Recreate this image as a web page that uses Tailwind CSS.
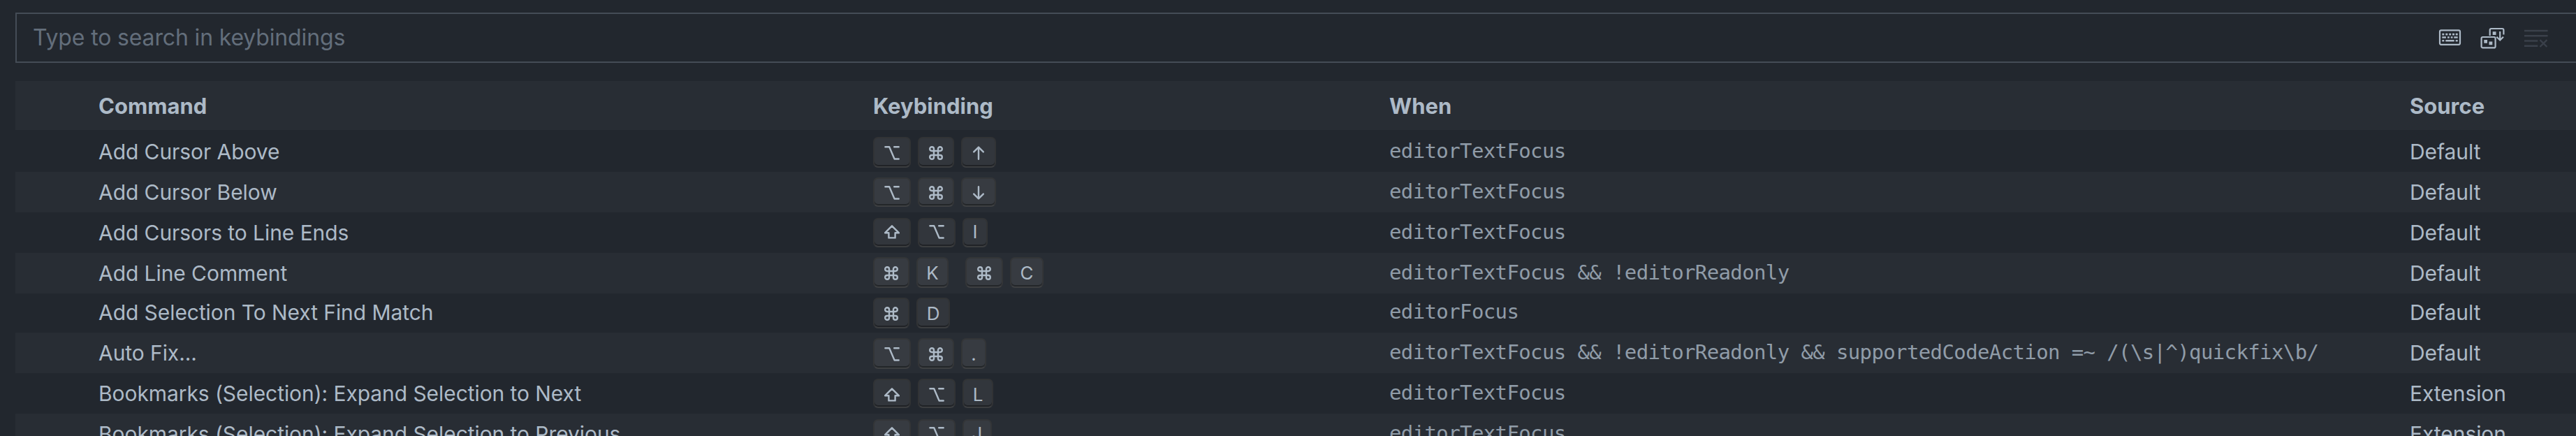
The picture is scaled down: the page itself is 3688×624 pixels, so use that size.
<!DOCTYPE html>
<html lang="en">
<head>
    <meta charset="UTF-8">
    <meta name="viewport" content="width=device-width, initial-scale=1.0">
    <title>Keyboard Shortcuts</title>
    <script src="https://cdn.jsdelivr.net/npm/@tailwindcss/browser@4"></script>
</head>
<body class="h-[624px] overflow-hidden bg-[#22272e] font-['Inter',sans-serif] text-[30px] tracking-[-0.07px] text-[#adbac7]">

    <div class="flex h-full flex-col pl-[22px] pt-[18px]">

        <!-- Search -->
        <div class="flex h-[72px] shrink-0 items-center justify-between border-y-2 border-l-2 border-[#444c56] pl-[23px] pr-[39px]">
            <span class="text-[32px] tracking-[-0.15px] text-[#636e7b]">Type to search in keybindings</span>
            <div class="flex gap-[25px]">
                <!-- Record keys -->
                <svg class="size-[36px]" viewBox="0 0 36 36" fill="currentColor">
                    <rect x="4" y="7.4" width="29" height="20.4" rx="2" fill="none" stroke="currentColor" stroke-width="2.2"/>
                    <path d="M7.3 11.8h3v2.6h-3zM12.3 11.8h3v2.6h-3zM17.2 11.8h3v2.6h-3zM22 11.8h3v2.6h-3zM26.7 11.8h3v2.6h-3z"/>
                    <path d="M7.3 16.2h5.6v2.6H7.3zM15 16.2h2.8v2.6H15zM19.7 16.2h2.8v2.6h-2.8zM24.3 16.2h5.4v2.6h-5.4z"/>
                    <path d="M7.3 21h3v2.6h-3zM12.3 21h12.4v2.6H12.3zM26.7 21h3v2.6h-3z"/>
                </svg>
                <!-- Sort by precedence -->
                <svg class="size-[36px]" viewBox="0 0 36 36" fill="none" stroke="currentColor" stroke-width="2.2">
                    <rect x="2.6" y="17" width="20" height="15.4" rx="2"/>
                    <path d="M14.7 15V7a2 2 0 0 1 2-2h15.7a2 2 0 0 1 2 2v6.5"/>
                    <path d="M29.2 9v12.4M24.4 16.7l4.8 4.8 4.8-4.8"/>
                    <path d="M6.3 21H11v4.8H6.3zM13.5 23.4h4.8v4.8h-4.8zM18.7 9.2h4.8V14h-4.8z" fill="currentColor" stroke="none"/>
                </svg>
                <!-- Clear input -->
                <svg class="ml-[2px] size-[36px] text-[#3a404a]" viewBox="0 0 36 36" fill="none" stroke="currentColor" stroke-width="2.4">
                    <path d="M1 8h33.6M1 15.3h33.6M1 22.5h19.3M1 29.7h19.3M23.4 21.2l10 9.8M33.4 21.2l-10 9.8"/>
                </svg>
            </div>
        </div>

        <!-- Table header -->
        <div class="mt-[26px] grid h-[70px] shrink-0 grid-cols-[1109px_739px_1461px_1fr] items-center bg-[#282d34] pl-[119px] pt-[3px] text-[31px] font-bold tracking-normal">
            <span>Command</span>
            <span>Keybinding</span>
            <span>When</span>
            <span>Source</span>
        </div>

        <div id="rows"></div>
    </div>

    <script>
        const ROW = 'grid grid-cols-[1109px_739px_1461px_1fr] items-center pl-[119px]';
        const KEY = 'flex items-start justify-center rounded-[7px] border-2 border-[#333333]/60 border-b-[#444444]/60 bg-[#808080]/17 shadow-[inset_0_-2px_0_rgba(0,0,0,0.36)]';

        const icon = (w, d) => `<svg class="${w} h-[20px]" viewBox="0 0 ${w === 'w-[20px]' ? 20 : w === 'w-[16px]' ? 16 : 22} 20" fill="none" stroke="currentColor" stroke-width="2.4" stroke-linecap="round" stroke-linejoin="round"><path d="${d}"/></svg>`;

        const glyphs = {
            option: icon('w-[22px]', 'M1.4 1.3H7.2L14.6 18.5H20.7M14.2 1.3H20.7'),
            cmd: icon('w-[20px]', 'M7 7V4.1A2.9 2.9 0 1 0 4.1 7H15.9A2.9 2.9 0 1 0 13 4.1V15.9A2.9 2.9 0 1 0 15.9 13H4.1A2.9 2.9 0 1 0 7 15.9Z'),
            shift: icon('w-[22px]', 'M11 1.3L21 11.3H15.6V18.4H6.4V11.3H1Z'),
            up: icon('w-[16px]', 'M8 1.8V18.8M1.2 8.4L8 1.6L14.8 8.4'),
            down: icon('w-[16px]', 'M8 1.2V18.2M1.2 11.6L8 18.4L14.8 11.6'),
        };

        // keys: [label, width class]; a null entry separates the two parts of a chord
        const rows = [
            { size: 'h-[60px] pt-[2px]', keysAt: 'mt-[8px]', keyBox: 'h-[44px] pt-[11px]', command: 'Add Cursor Above', keys: [['option', 'w-[54px]'], ['cmd', 'w-[52px]'], ['up', 'w-[50px]']], when: 'editorTextFocus', source: 'Default' },
            { size: 'h-[58px]', keysAt: 'mt-[8px]', keyBox: 'h-[42px] pt-[10px]', command: 'Add Cursor Below', keys: [['option', 'w-[54px]'], ['cmd', 'w-[52px]'], ['down', 'w-[50px]']], when: 'editorTextFocus', source: 'Default' },
            { size: 'h-[58px]', keysAt: 'mt-[8px]', keyBox: 'h-[42px] pt-[8px]', command: 'Add Cursors to Line Ends', keys: [['shift', 'w-[54px]'], ['option', 'w-[54px]'], ['I', 'w-[36px]']], when: 'editorTextFocus', source: 'Default' },
            { size: 'h-[58px]', keysAt: 'mt-[6px]', keyBox: 'h-[44px] pt-[11px]', command: 'Add Line Comment', keys: [['cmd', 'w-[52px]'], ['K', 'w-[46px]'], null, ['cmd', 'w-[54px]'], ['C', 'w-[48px]']], when: 'editorTextFocus && !editorReadonly', source: 'Default' },
            { size: 'h-[56px] pb-[2px]', keysAt: 'mt-[6px]', keyBox: 'h-[44px] pt-[11px]', command: 'Add Selection To Next Find Match', keys: [['cmd', 'w-[52px]'], ['D', 'w-[48px]']], when: 'editorFocus', source: 'Default' },
            { size: 'h-[58px]', keysAt: 'mt-[8px]', keyBox: 'h-[44px] pt-[11px]', command: 'Auto Fix...', keys: [['option', 'w-[54px]'], ['cmd', 'w-[52px]'], ['.', 'w-[36px]']], when: 'editorTextFocus && !editorReadonly && supportedCodeAction =~ /(\\s|^)quickfix\\b/', source: 'Default' },
            { size: 'h-[58px]', keysAt: 'mt-[8px]', keyBox: 'h-[42px] pt-[11px]', command: 'Bookmarks (Selection): Expand Selection to Next', keys: [['shift', 'w-[54px]'], ['option', 'w-[54px]'], ['L', 'w-[44px]']], when: 'editorTextFocus', source: 'Extension' },
            { size: 'h-[58px]', keysAt: 'mt-[8px]', keyBox: 'h-[42px] pt-[9px]', command: 'Bookmarks (Selection): Expand Selection to Previous', keys: [['shift', 'w-[54px]'], ['option', 'w-[54px]'], ['J', 'w-[42px]']], when: 'editorTextFocus', source: 'Extension' },
        ];

        function renderKey(key, keyBox) {
            if (!key) return '<span class="w-[4px]"></span>';
            const [label, width] = key;
            const face = glyphs[label] || `<span class="text-[26px] leading-[20px]">${label}</span>`;
            return `<span class="${KEY} ${keyBox} ${width}">${face}</span>`;
        }

        document.getElementById('rows').innerHTML = rows.map((row, i) => `
            <div class="${ROW} ${row.size} ${i % 2 ? 'bg-[#282d34]' : ''}">
                <span class="whitespace-nowrap">${row.command}</span>
                <div class="flex gap-[10px] self-start ${row.keysAt}">${row.keys.map(k => renderKey(k, row.keyBox)).join('')}</div>
                <span class="whitespace-nowrap pb-[1px] font-['DejaVu_Sans_Mono',monospace] text-[29px] tracking-[-0.62px] text-[#909ca8]">${row.when.replace(/&/g, '&amp;')}</span>
                <span>${row.source}</span>
            </div>`).join('');
    </script>

</body>
</html>
